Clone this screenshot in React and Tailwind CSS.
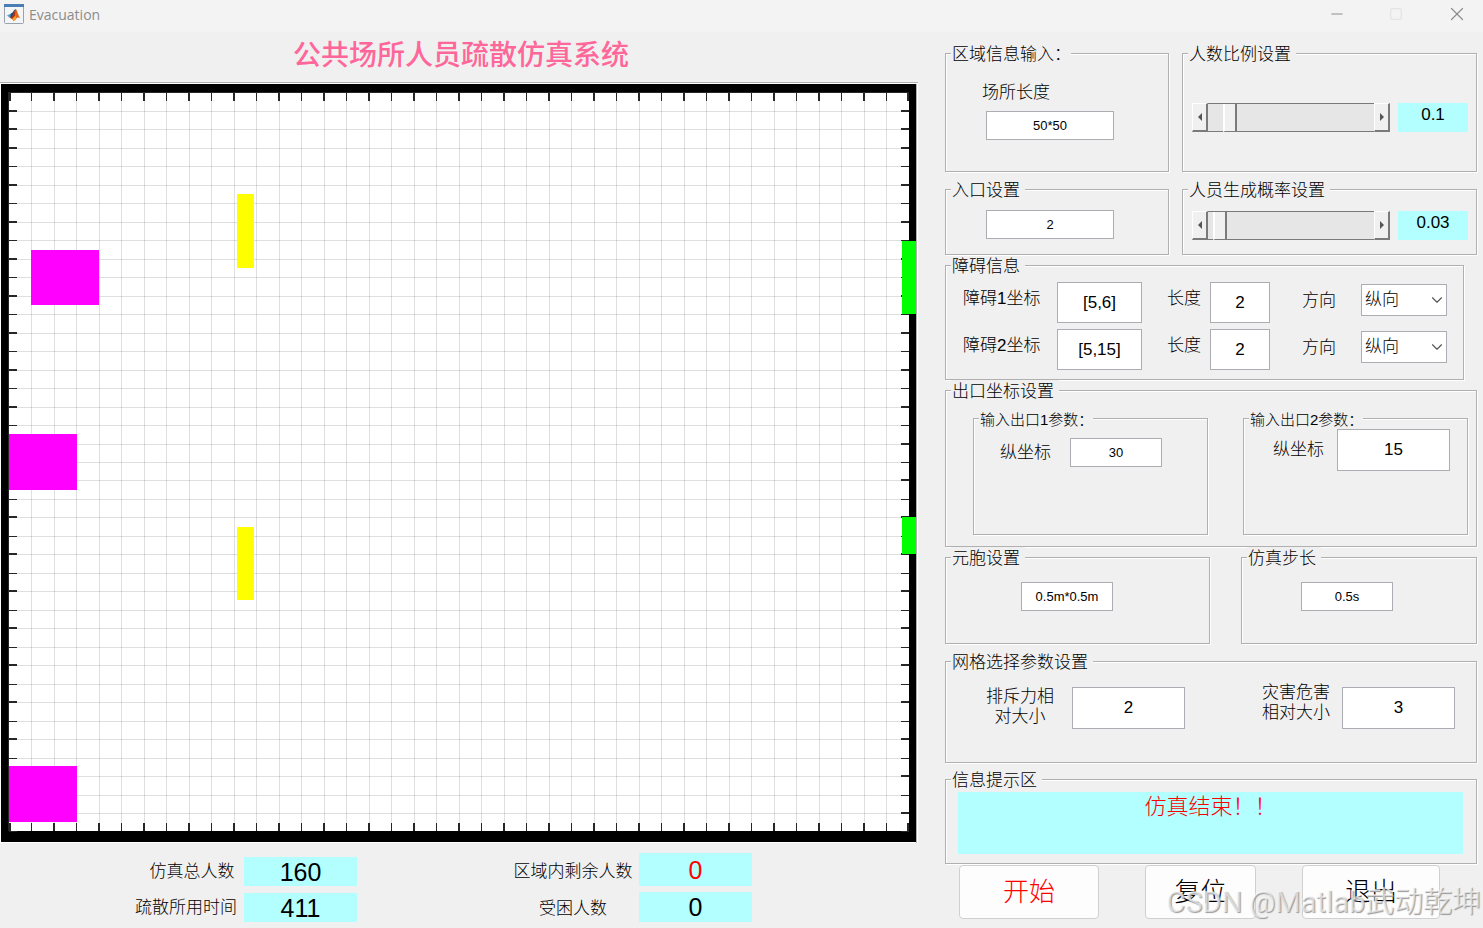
import { useState } from 'react';
import { ChevronDown, Minus, Square, X } from 'lucide-react';

const CELLS = 40;
const AXES = { left: 9, top: 10, width: 900, height: 739 };

const STARTS = [
    { x: 31, y: 168, h: 55 },
    { x: 9, y: 352, h: 56 },
    { x: 9, y: 684, h: 56 },
];

const OBSTACLES = [
    { y: 112, h: 74 },
    { y: 445, h: 73 },
];

const EXITS = [
    { y: 159, h: 73 },
    { y: 435, h: 37 },
];

const Group = ({ title, className = "", legendClassName = "text-[17px] pr-[5px]", children }) => (
    <fieldset className={`min-w-0 border border-[#b0b0b0] shadow-[1px_1px_0_white,inset_1px_1px_0_white] ${className}`}>
        <legend className={`ml-[5px] pl-[1px] pt-[4px] leading-[16px] bg-[#f0f0f0] whitespace-nowrap ${legendClassName}`}>{title}</legend>
        {children}
    </fieldset>
);

const Field = ({ className = "", ...props }) => (
    <input type="text" className={`min-w-0 bg-white border border-[#abadb3] text-center text-black outline-none ${className}`} {...props} />
);

const Slider = ({ label, value, onChange }) => {
    const step = (delta) => onChange(Math.min(1, Math.max(0, Math.round((value + delta) * 100) / 100)));
    const buttonClass = "w-[16px] h-[29px] shrink-0 flex items-center justify-center bg-[#f0f0f0] border-t border-l border-t-white border-l-white border-r-2 border-r-[#7a7a7a] border-b-2 border-b-[#7a7a7a]";

    return (
        <div className="flex items-start gap-2 pl-[9px] pr-[8px]">
            <div className="flex flex-1 min-w-0">
                <button type="button" aria-label={`${label} -`} onClick={() => step(-0.01)} className={buttonClass}>
                    <svg width="4" height="8" viewBox="0 0 4 8"><path d="M4 0v8L0 4z" fill="#555" /></svg>
                </button>
                <input
                    type="range"
                    aria-label={label}
                    min="0"
                    max="1"
                    step="0.01"
                    value={value}
                    onChange={(e) => onChange(Number(e.target.value))}
                    className="flex-1 min-w-0 h-[29px] appearance-none bg-[#e6e6e6] border-y border-[#7a7a7a] outline-none [&::-webkit-slider-thumb]:appearance-none [&::-webkit-slider-thumb]:w-[14px] [&::-webkit-slider-thumb]:h-[28px] [&::-webkit-slider-thumb]:bg-[#f0f0f0] [&::-webkit-slider-thumb]:border-l-2 [&::-webkit-slider-thumb]:border-l-white [&::-webkit-slider-thumb]:border-r-2 [&::-webkit-slider-thumb]:border-r-[#7a7a7a] [&::-webkit-slider-thumb]:border-b [&::-webkit-slider-thumb]:border-b-[#7a7a7a]"
                />
                <button type="button" aria-label={`${label} +`} onClick={() => step(0.01)} className={buttonClass}>
                    <svg width="4" height="8" viewBox="0 0 4 8"><path d="M0 0v8l4-4z" fill="#555" /></svg>
                </button>
            </div>
            <output className="w-[70px] h-[29px] bg-[#b3ffff] text-center text-[17px] leading-[24px]">{value}</output>
        </div>
    );
};

const ObstacleRow = ({ index, position }) => (
    <div className="grid grid-cols-[94fr_110fr_43fr_92fr_59fr_86fr] items-start">
        <label htmlFor={`pos${index}`} className="mt-[7px] whitespace-nowrap">障碍{index}坐标</label>
        <Field id={`pos${index}`} defaultValue={position} className="w-[85px] h-[41px]" />
        <label htmlFor={`len${index}`} className="mt-[7px]">长度</label>
        <Field id={`len${index}`} defaultValue="2" className="w-[60px] h-[41px]" />
        <label htmlFor={`dir${index}`} className="mt-[9px]">方向</label>
        <div className="relative mt-[2px]">
            <select id={`dir${index}`} defaultValue="v" className="w-full h-[32px] pl-[3px] appearance-none bg-white border border-[#abadb3] outline-none">
                <option value="v">纵向</option>
                <option value="h">横向</option>
            </select>
            <ChevronDown size={18} strokeWidth={1.5} className="absolute right-[1px] top-[7px] text-[#555] pointer-events-none" />
        </div>
    </div>
);

const Stat = ({ label, value, className = "", labelClassName, valueClassName = "" }) => (
    <div className={`flex items-center ${className}`}>
        <span className={`text-center whitespace-nowrap text-[17px] leading-[20px] ${labelClassName}`}>{label}</span>
        <output className={`w-[113px] h-full flex items-center justify-center bg-[#b3ffff] text-[25px] ${valueClassName}`}>{value}</output>
    </div>
);

const Plot = () => {
    const { left, top, width, height } = AXES;
    const lines = Array.from({ length: CELLS + 1 }, (_, i) => i);
    const px = (i) => Math.floor(left + (i * width) / CELLS);
    const py = (i) => Math.ceil(top + (i * height) / CELLS);

    return (
        <svg viewBox="0 0 918 761" className="block w-full h-auto" shapeRendering="crispEdges">
            <rect width="918" height="761" fill="#fff" />
            <rect width="918" height="1" fill="#b0b0b0" />
            <rect x="916" y="2" width="1" height="759" fill="#b0b0b0" />
            <rect x="1" y="2" width="915" height="758" fill="#000" />
            <rect x={left - 1} y={top} width={width + 1} height={height} fill="#262626" />
            <rect x={left} y={top + 1} width={width} height={height - 1} fill="#fff" />
            {lines.slice(1, -1).map((i) => (
                <g key={i} fill="#262626">
                    <rect x={px(i)} y={top + 1} width="1" height={height - 1} fillOpacity="0.15" />
                    <rect x={left} y={py(i)} width={width} height="1" fillOpacity="0.15" />
                </g>
            ))}
            {lines.map((i) => {
                // every second tick falls on a pixel edge and takes two pixels
                const w = i % 2 ? 1 : 2;
                const h = i % 2 || i === 2 ? 2 : 1;
                const tx = i === CELLS ? px(i) - 2 : i === 0 ? px(i) : px(i) - w + 1;
                const ty = py(i) - h + 1;
                return (
                    <g key={i} fill="#262626">
                        <rect x={tx} y={top} width={w} height="9" />
                        <rect x={tx} y={top + height - 8} width={w} height="8" />
                        <rect x={left} y={ty} width="8" height={h} />
                        <rect x={left + width - 8} y={ty} width="8" height={h} />
                    </g>
                );
            })}
            {STARTS.map((s) => <rect key={s.y} x={s.x} y={s.y} width="68" height={s.h} fill="#f0f" />)}
            {OBSTACLES.map((o) => <rect key={o.y} x="237" y={o.y} width="17" height={o.h} fill="#ff0" />)}
            {EXITS.map((e) => <rect key={e.y} x="902" y={e.y} width="14" height={e.h} fill="#0f0" />)}
        </svg>
    );
};

const MatlabIcon = () => (
    <svg width="20" height="20" viewBox="0 0 20 20">
        <rect x="0.5" y="0.5" width="19" height="19" rx="1" fill="#f4f5f7" stroke="#9aa3ad" />
        <rect x="0" y="0" width="20" height="3" fill="#4a7db5" />
        <path d="M3 11.5l4-2 1.5 1.8L6 14z" fill="#4f9fd0" />
        <path d="M7 9.500c2-.5 2.500-3.500 4.500-4.500L9 12.500 6 14z" fill="#27466b" />
        <path d="M11.500 5c1.500 0 2.500 6.500 5 9.500-2-1.500-3.500-1-4.500.5-.8 1.200-1.500 1.800-2.500 2-.5-2-1.500-3-3.500-3 3-1 4-5 5.500-9z" fill="#e2651c" />
        <path d="M11.500 5c-.2 4-.8 8-2 12-.5-1.800-1.500-2.500-3.500-3 3-1 4-5 5.500-9z" fill="#a82a18" />
        <path d="M9.500 17c-.3-1-.7-1.700-1.300-2.200l3.300-3.300.5 3.500c-.8 1.200-1.500 1.800-2.500 2z" fill="#f6a623" />
    </svg>
);

const App = () => {
    const [ratio, setRatio] = useState(0.1);
    const [probability, setProbability] = useState(0.03);

    return (
        <div className="relative min-h-screen overflow-hidden bg-[#f0f0f0] text-black text-[17px] leading-[20px] font-light font-['Liberation_Sans','Noto_Sans_CJK_SC',sans-serif]">
            <header className="flex items-start justify-between h-8 pl-1 pt-[3px] pr-[19px] bg-[#f3f3f3]">
                <div className="flex items-center gap-[5px]">
                    <MatlabIcon />
                    <span className="pt-[2px] text-[14px] font-normal text-[#8c8c8c] font-['Open_Sans',sans-serif]">Evacuation</span>
                </div>
                <div className="flex items-center gap-[43px] text-[#8c8c8c]">
                    <button type="button" aria-label="最小化"><Minus size={18} strokeWidth={1.3} /></button>
                    <button type="button" aria-label="最大化" disabled className="text-[#dedede]"><Square size={14} strokeWidth={1.5} /></button>
                    <button type="button" aria-label="关闭" className="-mr-1"><X size={22} strokeWidth={1.3} /></button>
                </div>
            </header>

            <div className="grid grid-cols-[918fr_565fr] items-start">
                <main className="min-w-0">
                    <h1 className="h-[50px] pl-[4px] leading-[48px] text-center text-[28px] font-medium text-[#ff6699]">公共场所人员疏散仿真系统</h1>
                    <Plot />
                    <div className="grid grid-cols-[357fr_395fr_166fr]">
                        <div className="flex flex-col items-end gap-[7px] pt-[14px]">
                            <Stat label="仿真总人数" value="160" className="h-[29px]" labelClassName="w-[104px]" />
                            <Stat label="疏散所用时间" value="411" className="h-[29px]" labelClassName="w-[116px]" />
                        </div>
                        <div className="flex flex-col items-end gap-[6px] pt-[10px]">
                            <Stat label="区域内剩余人数" value="0" className="h-[33px]" labelClassName="w-[132px] pt-[4px]" valueClassName="text-[#ff0000]" />
                            <Stat label="受困人数" value="0" className="h-[30px]" labelClassName="w-[132px] pt-[4px]" />
                        </div>
                    </div>
                </main>

                <aside className="min-w-0 pl-[27px] pr-[6px] pt-[11px]">
                    <div className="grid grid-cols-[224fr_295fr] gap-x-[13px] gap-y-[7px]">
                        <Group title="区域信息输入：" className="h-[129px]" legendClassName="text-[17px]">
                            <div className="flex flex-col items-start gap-[8px] pl-[36px] pt-[20px]">
                                <label htmlFor="size">场所长度</label>
                                <Field id="size" defaultValue="50*50" className="ml-[4px] w-[128px] h-[29px] text-[13px]" />
                            </div>
                        </Group>
                        <Group title="人数比例设置" className="h-[129px]">
                            <div className="pt-[40px]">
                                <Slider label="人数比例" value={ratio} onChange={setRatio} />
                            </div>
                        </Group>
                        <Group title="入口设置" className="h-[76px]">
                            <div className="pl-[40px] pt-[11px]">
                                <Field aria-label="入口设置" defaultValue="2" className="block w-[128px] h-[29px] text-[13px]" />
                            </div>
                        </Group>
                        <Group title="人员生成概率设置" className="h-[76px]">
                            <div className="pt-[12px]">
                                <Slider label="人员生成概率" value={probability} onChange={setProbability} />
                            </div>
                        </Group>
                    </div>

                    <Group title="障碍信息" className="h-[125px] mr-[13px]">
                        <div className="flex flex-col gap-[6px] pl-[17px] pr-[16px] pt-[7px]">
                            <ObstacleRow index={1} position="[5,6]" />
                            <ObstacleRow index={2} position="[5,15]" />
                        </div>
                    </Group>

                    <Group title="出口坐标设置" className="h-[167px]">
                        <div className="grid grid-cols-[235fr_225fr] gap-[35px] pl-[27px] pr-[8px] pt-[8px]">
                            <Group title="输入出口1参数：" className="h-[127px]" legendClassName="text-[15px]">
                                <div className="flex items-center gap-[19px] pl-[26px] pt-[10px]">
                                    <label htmlFor="exit1">纵坐标</label>
                                    <Field id="exit1" defaultValue="30" className="w-[92px] h-[29px] text-[13px]" />
                                </div>
                            </Group>
                            <Group title="输入出口2参数：" className="h-[127px]" legendClassName="text-[15px]">
                                <div className="flex items-center gap-[13px] pl-[29px] pt-[1px]">
                                    <label htmlFor="exit2">纵坐标</label>
                                    <Field id="exit2" defaultValue="15" className="w-[113px] h-[42px]" />
                                </div>
                            </Group>
                        </div>
                    </Group>

                    <div className="grid grid-cols-[265fr_236fr] gap-[31px]">
                        <Group title="元胞设置" className="h-[97px]">
                            <div className="pl-[75px] pt-[15px]">
                                <Field aria-label="元胞设置" defaultValue="0.5m*0.5m" className="block w-[92px] h-[29px] text-[13px]" />
                            </div>
                        </Group>
                        <Group title="仿真步长" className="h-[97px]">
                            <div className="pl-[59px] pt-[15px]">
                                <Field aria-label="仿真步长" defaultValue="0.5s" className="block w-[92px] h-[29px] text-[13px]" />
                            </div>
                        </Group>
                    </div>

                    <Group title="网格选择参数设置" className="h-[112px] mt-[7px]">
                        <div className="flex items-start justify-between pl-[40px] pr-[21px] pt-[16px]">
                            <div className="flex items-start gap-[18px]">
                                <label htmlFor="repulsion" className="text-center">排斥力相<br />对大小</label>
                                <Field id="repulsion" defaultValue="2" className="w-[113px] h-[42px]" />
                            </div>
                            <div className="flex items-start gap-[12px]">
                                <label htmlFor="hazard" className="-mt-1">灾害危害<br />相对大小</label>
                                <Field id="hazard" defaultValue="3" className="w-[113px] h-[42px]" />
                            </div>
                        </div>
                    </Group>

                    <Group title="信息提示区" className="h-[95px] mt-[6px]">
                        <p role="status" className="ml-[12px] mr-[13px] mt-[3px] h-[62px] bg-[#b3ffff] text-center text-[22px] leading-[30px] text-[#ff0000]">仿真结束！！</p>
                    </Group>

                    <div className="flex gap-[46px] pl-[14px] pt-[1px]">
                        <button type="button" className="w-[140px] h-[54px] rounded-[4px] border border-[#d0d0d0] bg-[#fdfdfd] text-[26px] text-[#ff0000]">开始</button>
                        <button type="button" className="w-[111px] h-[54px] rounded-[4px] border border-[#d0d0d0] bg-[#fdfdfd] text-[26px]">复位</button>
                        <button type="button" className="w-[138px] h-[54px] rounded-[4px] border border-[#d0d0d0] bg-[#fdfdfd] text-[26px]">退出</button>
                    </div>
                </aside>
            </div>

            <div className="absolute right-[2px] bottom-[6px] whitespace-nowrap pointer-events-none text-[29px] leading-[40px] font-normal text-white/60 [text-shadow:1px_1px_1px_#999] font-[Roboto,'Noto_Sans_CJK_SC',sans-serif]">CSDN @Matlab武动乾坤</div>
        </div>
    );
};

export default App;
